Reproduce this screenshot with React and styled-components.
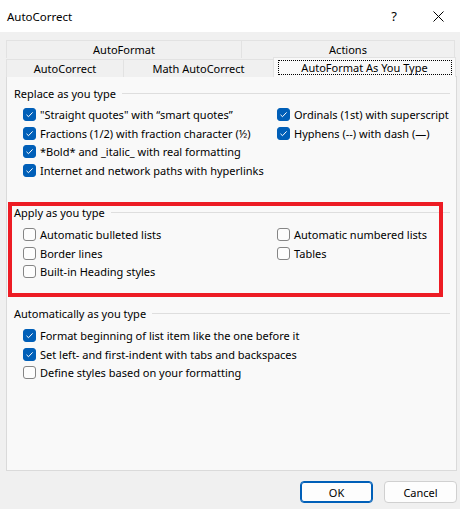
import styled, { createGlobalStyle } from 'styled-components'

const GlobalStyle = createGlobalStyle`
    html, body {
        margin: 0;
        padding: 0;
        background: #f0f0f0;
    }
    body {
        font-family: 'Noto Sans', 'Open Sans', sans-serif;
        font-size: 11px;
        color: #000;
    }
`

const Dialog = styled.div`
    width: 460px;
    height: 509px;
    display: flex;
    flex-direction: column;
    background: #f0f0f0;
    overflow: hidden;
`

const TitleBar = styled.div`
    height: 32px;
    display: flex;
    align-items: center;
    background: #fff;
    padding-left: 7px;
`

const Title = styled.div`
    flex: 1;
    font-size: 11.5px;
`

const TitleButton = styled.div`
    width: 44px;
    height: 32px;
    display: flex;
    align-items: center;
    justify-content: center;
    font-size: 13px;
`

const Body = styled.div`
    flex: 1;
    display: flex;
    flex-direction: column;
    padding: 8px 3px 0 6px;
`

const TabRow = styled.div`
    display: flex;
    height: ${(p) => p.$h}px;
    align-items: flex-end;
`

const Tab = styled.div`
    width: ${(p) => p.$w}px;
    height: ${(p) => (p.$active ? 20 : 18)}px;
    display: flex;
    align-items: center;
    justify-content: center;
    box-sizing: border-box;
    border: 1px solid #e2e2e2;
    border-bottom: none;
    margin-left: -1px;
    background: ${(p) => (p.$active ? '#f9f9f9' : '#f0f0f0')};
    position: relative;
    z-index: ${(p) => (p.$active ? 2 : 1)};
    &:first-child {
        margin-left: 0;
    }
`

const Focus = styled.span`
    display: flex;
    align-items: center;
    justify-content: center;
    width: 174px;
    height: 15px;
    box-sizing: border-box;
    border: 1px dotted #000;
`

const Panel = styled.div`
    width: 451px;
    height: 395px;
    box-sizing: border-box;
    background: #f9f9f9;
    border: 1px solid #dadada;
    margin-top: -1px;
    padding: 8px 6px 0 0;
    display: flex;
    flex-direction: column;
`

const Group = styled.div`
    position: relative;
    margin-bottom: 24.7px;
`

const GroupHeader = styled.div`
    display: flex;
    align-items: center;
    height: 16px;
    padding-left: 7px;
    gap: 6px;
    &::after {
        content: '';
        flex: 1;
        height: 1px;
        background: #dedede;
    }
`

const Items = styled.div`
    display: grid;
    grid-template-columns: 254px auto;
    grid-auto-rows: 18.8px;
    margin-top: 4px;
    padding-left: 16px;
`

const Item = styled.label`
    display: flex;
    align-items: center;
    gap: 4px;
    grid-column: ${(p) => p.$col};
    white-space: nowrap;
`

const Box = styled.span`
    width: 13px;
    height: 13px;
    box-sizing: border-box;
    border-radius: 3px;
    display: flex;
    align-items: center;
    justify-content: center;
    background: ${(p) => (p.$checked ? '#005fb8' : '#fdfdfd')};
    border: 1px solid ${(p) => (p.$checked ? '#005fb8' : '#858585')};
    flex-shrink: 0;
`

const Highlight = styled.div`
    position: absolute;
    left: 1px;
    top: -3px;
    width: 435px;
    height: 95px;
    box-sizing: border-box;
    border: 4px solid #ed1c24;
    pointer-events: none;
`

const Footer = styled.div`
    display: flex;
    justify-content: flex-end;
    gap: 11px;
    padding: 10px 0 0 0;
`

const Button = styled.button`
    width: ${(p) => p.$w}px;
    height: 22px;
    box-sizing: border-box;
    border-radius: 4px;
    background: #fdfdfd;
    border: 1px solid ${(p) => (p.$primary ? '#005fb8' : '#d0d0d0')};
    box-shadow: ${(p) => (p.$primary ? 'inset 0 0 0 1px #005fb8' : 'none')};
    font-family: inherit;
    font-size: 11px;
    color: #000;
    padding: 0;
`

function Check() {
    return (
        <svg width="9" height="9" viewBox="0 0 9 9">
            <path d="M1.5 4.8 L3.5 6.7 L7.6 2.4" fill="none" stroke="#fff" strokeWidth="1" />
        </svg>
    )
}

function CheckItem({ label, checked, col = 1 }) {
    return (
        <Item $col={col}>
            <Box $checked={checked}>{checked && <Check />}</Box>
            {label}
        </Item>
    )
}

const groups = [
    {
        title: 'Replace as you type',
        rows: [
            ['"Straight quotes" with \u201Csmart quotes\u201D', true, 'Ordinals (1st) with superscript', true],
            ['Fractions (1/2) with fraction character (\u00BD)', true, 'Hyphens (--) with dash (\u2014)', true],
            ['*Bold* and _italic_ with real formatting', true],
            ['Internet and network paths with hyperlinks', true],
        ],
    },
    {
        title: 'Apply as you type',
        highlight: true,
        rows: [
            ['Automatic bulleted lists', false, 'Automatic numbered lists', false],
            ['Border lines', false, 'Tables', false],
            ['Built-in Heading styles', false],
        ],
    },
    {
        title: 'Automatically as you type',
        rows: [
            ['Format beginning of list item like the one before it', true],
            ['Set left- and first-indent with tabs and backspaces', true],
            ['Define styles based on your formatting', false],
        ],
    },
]

export default function App() {
    return (
        <>
            <GlobalStyle />
            <Dialog>
                <TitleBar>
                    <Title>AutoCorrect</Title>
                    <TitleButton>?</TitleButton>
                    <TitleButton>
                        <svg width="11" height="11" viewBox="0 0 11 11">
                            <path d="M0.5 0.5 L10.5 10.5 M10.5 0.5 L0.5 10.5" stroke="#000" strokeWidth="1" />
                        </svg>
                    </TitleButton>
                </TitleBar>
                <Body>
                    <TabRow $h={18}>
                        <Tab $w={236}>AutoFormat</Tab>
                        <Tab $w={214}>Actions</Tab>
                    </TabRow>
                    <TabRow $h={19}>
                        <Tab $w={118}>AutoCorrect</Tab>
                        <Tab $w={151}>Math AutoCorrect</Tab>
                        <Tab $w={183} $active>
                            <Focus>AutoFormat As You Type</Focus>
                        </Tab>
                    </TabRow>
                    <Panel>
                        {groups.map((g) => (
                            <Group key={g.title}>
                                <GroupHeader>{g.title}</GroupHeader>
                                <Items>
                                    {g.rows.map(([a, ac, b, bc]) => (
                                        <>
                                            <CheckItem key={a} label={a} checked={ac} col={1} />
                                            {b && <CheckItem key={b} label={b} checked={bc} col={2} />}
                                        </>
                                    ))}
                                </Items>
                                {g.highlight && <Highlight />}
                            </Group>
                        ))}
                    </Panel>
                    <Footer>
                        <Button $w={73} $primary>OK</Button>
                        <Button $w={73}>Cancel</Button>
                    </Footer>
                </Body>
            </Dialog>
        </>
    )
}
